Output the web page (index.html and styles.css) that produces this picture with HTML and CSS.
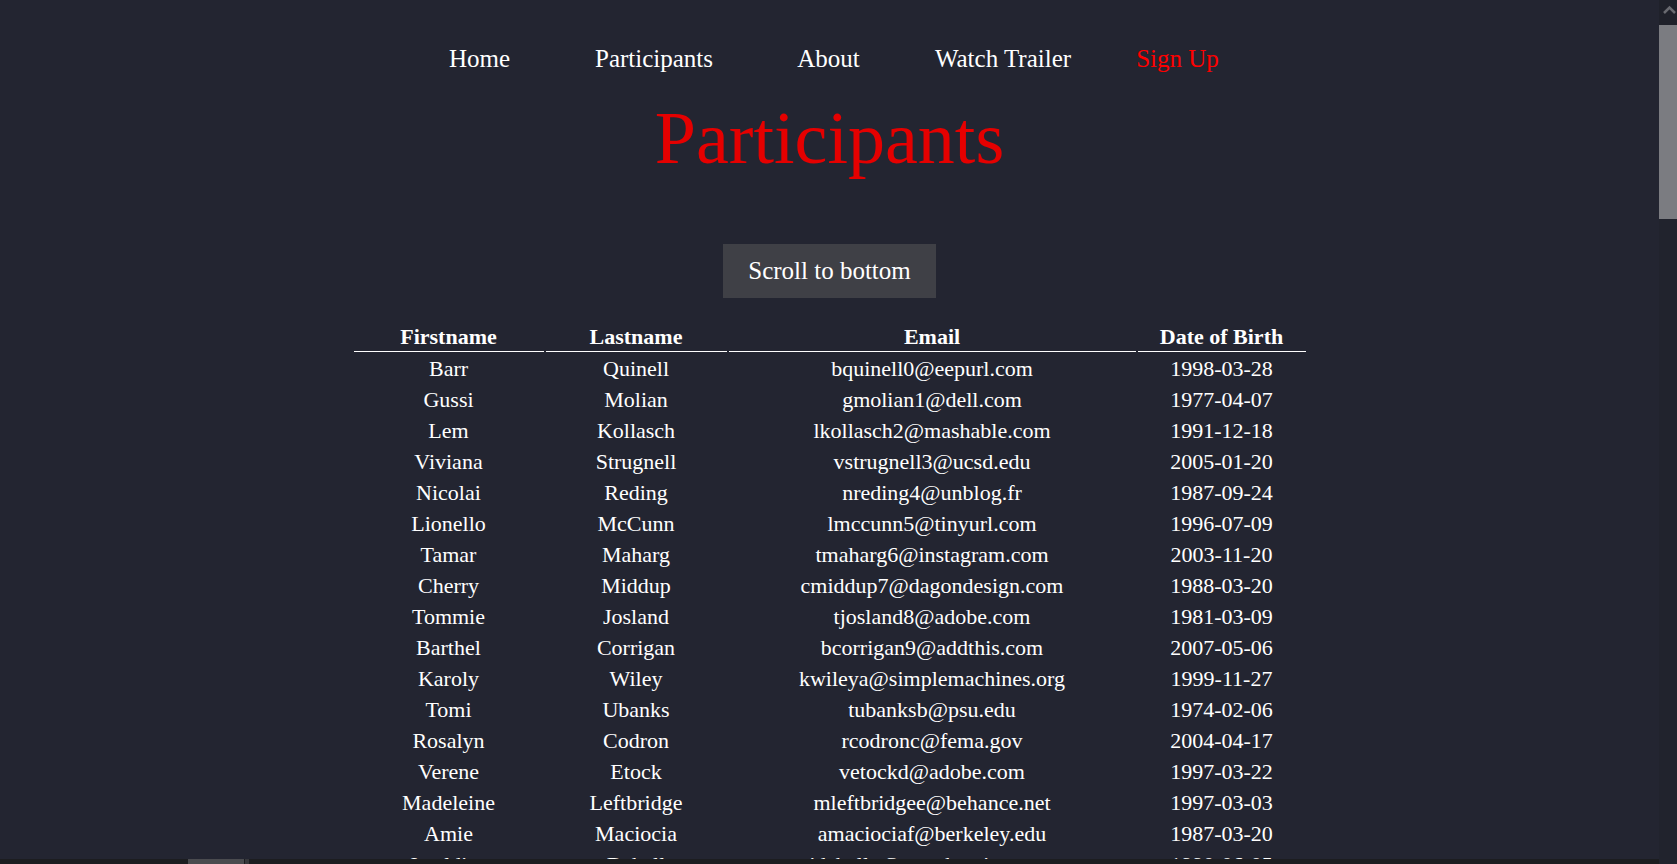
FILE: index.html
```html
<!DOCTYPE html>
<html lang="en">
<head>
<meta charset="utf-8">
<title>Participants</title>
<link rel="stylesheet" href="styles.css">
</head>
<body>
<div class="page">
  <main class="content">
    <nav class="nav">
      <a href="#">Home</a>
      <a href="#">Participants</a>
      <a href="#">About</a>
      <a href="#">Watch Trailer</a>
      <a href="#" class="signup">Sign Up</a>
    </nav>
    <h1 class="title">Participants</h1>
    <div class="actions"><button class="btn" type="button">Scroll to bottom</button></div>
    <table class="people">
      <thead>
        <tr><th class="c1">Firstname</th><th class="c2">Lastname</th><th class="c3">Email</th><th class="c4">Date of Birth</th></tr>
      </thead>
      <tbody>
        <tr><td>Barr</td><td>Quinell</td><td>bquinell0@eepurl.com</td><td>1998-03-28</td></tr>
        <tr><td>Gussi</td><td>Molian</td><td>gmolian1@dell.com</td><td>1977-04-07</td></tr>
        <tr><td>Lem</td><td>Kollasch</td><td>lkollasch2@mashable.com</td><td>1991-12-18</td></tr>
        <tr><td>Viviana</td><td>Strugnell</td><td>vstrugnell3@ucsd.edu</td><td>2005-01-20</td></tr>
        <tr><td>Nicolai</td><td>Reding</td><td>nreding4@unblog.fr</td><td>1987-09-24</td></tr>
        <tr><td>Lionello</td><td>McCunn</td><td>lmccunn5@tinyurl.com</td><td>1996-07-09</td></tr>
        <tr><td>Tamar</td><td>Maharg</td><td>tmaharg6@instagram.com</td><td>2003-11-20</td></tr>
        <tr><td>Cherry</td><td>Middup</td><td>cmiddup7@dagondesign.com</td><td>1988-03-20</td></tr>
        <tr><td>Tommie</td><td>Josland</td><td>tjosland8@adobe.com</td><td>1981-03-09</td></tr>
        <tr><td>Barthel</td><td>Corrigan</td><td>bcorrigan9@addthis.com</td><td>2007-05-06</td></tr>
        <tr><td>Karoly</td><td>Wiley</td><td>kwileya@simplemachines.org</td><td>1999-11-27</td></tr>
        <tr><td>Tomi</td><td>Ubanks</td><td>tubanksb@psu.edu</td><td>1974-02-06</td></tr>
        <tr><td>Rosalyn</td><td>Codron</td><td>rcodronc@fema.gov</td><td>2004-04-17</td></tr>
        <tr><td>Verene</td><td>Etock</td><td>vetockd@adobe.com</td><td>1997-03-22</td></tr>
        <tr><td>Madeleine</td><td>Leftbridge</td><td>mleftbridgee@behance.net</td><td>1997-03-03</td></tr>
        <tr><td>Amie</td><td>Maciocia</td><td>amaciociaf@berkeley.edu</td><td>1987-03-20</td></tr>
        <tr><td>Jeraldine</td><td>Dabell</td><td>jdabellg@reverbnation.com</td><td>1990-06-05</td></tr>
      </tbody>
    </table>
  </main>
  <div class="hbar"><span class="hbar-thumb"></span><span class="hbar-nub"></span></div>
</div>
<aside class="vbar">
  <div class="vbar-btn">
    <svg width="18" height="25" viewBox="0 0 18 25"><path d="M5 13 L10.5 7.5 L16 13" fill="none" stroke="#696a70" stroke-width="2.5"/></svg>
  </div>
  <div class="vbar-thumb"></div>
  <div class="vbar-track"></div>
</aside>
</body>
</html>
```

FILE: styles.css
```css
html {
  background: #232531;
  color: #ffffff;
}

body {
  margin: 0;
  height: 100vh;
  display: flex;
  overflow: hidden;
  font-family: "Liberation Serif", "Times New Roman", serif;
}

.page {
  flex: 1;
  min-width: 0;
  display: flex;
  flex-direction: column;
}

.content {
  flex: 1;
  min-height: 0;
  overflow: hidden;
}

.nav {
  display: grid;
  grid-template-columns: repeat(5, 174.5px);
  justify-content: center;
  padding: 45px 2px 0 0;
  font-size: 25px;
}

.nav a {
  color: #ffffff;
  text-decoration: none;
  text-align: center;
}

.nav .signup {
  color: #ff0000;
}

.title {
  margin: 23px 0 0;
  font-size: 74px;
  font-weight: normal;
  color: #e50000;
  text-align: center;
}

.actions {
  margin-top: 63px;
  text-align: center;
}

.btn {
  height: 54px;
  padding: 0 25.5px;
  border: 0;
  background: #3f4046;
  color: #ffffff;
  font-family: "Liberation Serif", "Times New Roman", serif;
  font-size: 25px;
  line-height: 54px;
}

.people {
  margin: 22px auto 0;
  border-spacing: 2px;
  font-size: 22px;
  color: #ffffff;
}

.people th,
.people td {
  padding: 1px;
  line-height: 27px;
  text-align: center;
}

.people th {
  font-weight: bold;
  border-bottom: 1px solid #ffffff;
}

.people .c1 { width: 188px; }
.people .c2 { width: 179px; }
.people .c3 { width: 405px; }
.people .c4 { width: 166px; }

.hbar {
  flex: 0 0 5px;
  display: flex;
  background: #1c1d20;
}

.hbar-thumb {
  margin-left: 188px;
  width: 56px;
  background: #4a4b4f;
}

.hbar-nub {
  margin-left: 1px;
  width: 4px;
  background: #36373b;
}

.vbar {
  flex: 0 0 18px;
  display: flex;
  flex-direction: column;
  background: #21232d;
}

.vbar-btn {
  height: 25px;
  background: #1f212a;
}

.vbar-btn svg {
  display: block;
}

.vbar-thumb {
  height: 194px;
  background: #7b7c81;
}

.vbar-track {
  flex: 1;
}
```
